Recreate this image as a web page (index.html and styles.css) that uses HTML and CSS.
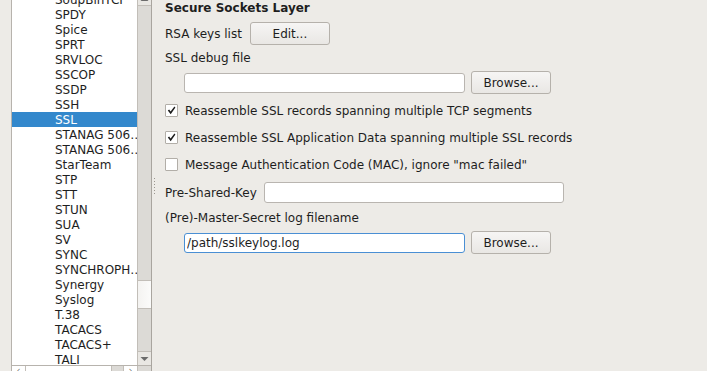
FILE: index.html
```html
<!DOCTYPE html>
<html lang="en">
<head>
  <meta charset="UTF-8" />
  <title>Preferences - Protocols - SSL</title>
  <link rel="stylesheet" href="styles.css">
</head>
<body>
  <div class="tree">
    <div class="tree-main">
      <ul class="proto-list">
        <li>SoupBinTCP</li>
        <li>SPDY</li>
        <li>Spice</li>
        <li>SPRT</li>
        <li>SRVLOC</li>
        <li>SSCOP</li>
        <li>SSDP</li>
        <li>SSH</li>
        <li class="selected">SSL</li>
        <li>STANAG 506…</li>
        <li>STANAG 506…</li>
        <li>StarTeam</li>
        <li>STP</li>
        <li>STT</li>
        <li>STUN</li>
        <li>SUA</li>
        <li>SV</li>
        <li>SYNC</li>
        <li>SYNCHROPH…</li>
        <li>Synergy</li>
        <li>Syslog</li>
        <li>T.38</li>
        <li>TACACS</li>
        <li>TACACS+</li>
        <li>TALI</li>
        <li>TAPA</li>
      </ul>
      <div class="vscroll">
        <div class="vs-btn vs-up">
          <svg width="9" height="6" viewBox="0 0 9 6"><path d="M0.5 5 L4.5 1 L8.5 5 Z" fill="#6b6b6b"/></svg>
        </div>
        <div class="vs-track">
          <div class="vs-thumb"></div>
        </div>
        <div class="vs-btn vs-down">
          <svg width="9" height="6" viewBox="0 0 9 6"><path d="M0.5 1 L4.5 5 L8.5 1 Z" fill="#6b6b6b"/></svg>
        </div>
      </div>
    </div>
    <div class="hscroll">
      <div class="hs-btn hs-left">&lsaquo;</div>
      <div class="hs-thumb"></div>
      <div class="hs-track"></div>
      <div class="hs-btn hs-right">&rsaquo;</div>
      <div class="hs-corner"></div>
    </div>
  </div>

  <div class="splitter"><div class="grip"></div></div>

  <div class="panel">
    <div class="title">Secure Sockets Layer</div>

    <div class="row rsa-row">
      <span>RSA keys list</span>
      <button class="btn">Edit...</button>
    </div>

    <div class="label debug-label">SSL debug file</div>
    <div class="row file-row">
      <input class="field file-field" type="text" value="">
      <button class="btn">Browse...</button>
    </div>

    <label class="check-row">
      <span class="box checked">
        <svg width="9" height="9" viewBox="0 0 9 9"><path d="M0.8 4.6 L2.2 3.6 L3.6 5.6 L7.4 0.6 L8.4 1.6 L3.7 8.2 Z" fill="#1c1c1c"/></svg>
      </span>
      Reassemble SSL records spanning multiple TCP segments
    </label>
    <label class="check-row">
      <span class="box checked">
        <svg width="9" height="9" viewBox="0 0 9 9"><path d="M0.8 4.6 L2.2 3.6 L3.6 5.6 L7.4 0.6 L8.4 1.6 L3.7 8.2 Z" fill="#1c1c1c"/></svg>
      </span>
      Reassemble SSL Application Data spanning multiple SSL records
    </label>
    <label class="check-row">
      <span class="box"></span>
      Message Authentication Code (MAC), ignore "mac failed"
    </label>

    <div class="row psk-row">
      <span class="psk-label">Pre-Shared-Key</span>
      <input class="field psk-field" type="text" value="">
    </div>

    <div class="label keylog-label">(Pre)-Master-Secret log filename</div>
    <div class="row file-row keylog-row">
      <input class="field file-field focused" type="text" value="/path/sslkeylog.log">
      <button class="btn">Browse...</button>
    </div>
  </div>
</body>
</html>
```

FILE: styles.css
```css
html, body {
  margin: 0;
  padding: 0;
  height: 100%;
  overflow: hidden;
}

body {
  display: flex;
  align-items: flex-start;
  background: #edebe7;
  color: #1e1e1e;
  font-family: 'DejaVu Sans', 'Liberation Sans', sans-serif;
  font-size: 12px;
}

/* protocol tree */

.tree {
  flex: none;
  margin-left: 11px;
  margin-top: -8px;
  width: 139px;
  border-left: 1px solid #b7b3ad;
  border-right: 1px solid #a9a59f;
  display: flex;
  flex-direction: column;
}

.tree-main {
  display: flex;
  height: 373px;
}

.proto-list {
  list-style: none;
  margin: 0;
  padding: 0;
  width: 125px;
  background: #fff;
  overflow: hidden;
}

.proto-list li {
  height: 15px;
  line-height: 16px;
  padding-left: 43px;
  white-space: nowrap;
  overflow: hidden;
}

.proto-list li.selected {
  background: #3388cc;
  color: #fff;
}

.vscroll {
  width: 13px;
  border-left: 1px solid #c2beb8;
  background: #dcdad6;
  display: flex;
  flex-direction: column;
}

.vs-btn {
  height: 13px;
  display: flex;
  align-items: center;
  justify-content: center;
  background: #e9e7e3;
}

.vs-up {
  border-bottom: 1px solid #c2beb8;
}

.vs-down {
  border-top: 1px solid #c2beb8;
}

.vs-track {
  flex: 1;
}

.vs-thumb {
  margin-top: 274px;
  height: 27px;
  border-top: 1px solid #c2beb8;
  border-bottom: 1px solid #c2beb8;
  background: linear-gradient(to right, #f4f3f1, #fbfbfa);
}

.hscroll {
  display: flex;
  height: 15px;
  border-top: 1px solid #b7b3ad;
  background: #fff;
  color: #6b6b6b;
  font-size: 10px;
  line-height: 10px;
}

.hs-btn {
  width: 13px;
  text-align: center;
}

.hs-thumb {
  width: 85px;
  border-left: 1px solid #c2beb8;
  border-right: 1px solid #c2beb8;
}

.hs-track {
  width: 11px;
  background: #dcdad6;
}

.hs-right {
  border-left: 1px solid #c2beb8;
}

.hs-corner {
  flex: 1;
  border-left: 1px solid #c2beb8;
  background: #dcdad6;
}

/* splitter */

.splitter {
  flex: none;
  width: 5px;
  height: 100%;
  display: flex;
  align-items: center;
  padding-left: 2px;
}

.grip {
  width: 1px;
  height: 16px;
  background: repeating-linear-gradient(to bottom, #9a968f 0, #9a968f 1px, transparent 1px, transparent 3px);
}

/* settings panel */

.panel {
  flex: 1;
  padding-left: 6px;
  display: flex;
  flex-direction: column;
}

.title {
  font-weight: bold;
  line-height: 16px;
  height: 14px;
}

.row {
  display: flex;
  align-items: center;
}

.rsa-row {
  margin-top: 8px;
  height: 23px;
  gap: 8px;
}

.label {
  line-height: 16px;
  height: 14px;
}

.debug-label {
  margin-top: 5px;
}

.file-row {
  margin-top: 7px;
  height: 23px;
  padding-left: 19px;
  gap: 6px;
}

.btn {
  width: 80px;
  height: 23px;
  padding: 0;
  border: 1px solid #b5b1ab;
  border-radius: 3px;
  background: linear-gradient(to bottom, #f6f5f4, #e9e7e4);
  color: #1e1e1e;
  font-family: inherit;
  font-size: 12px;
}

.field {
  box-sizing: border-box;
  height: 20px;
  padding: 0 2px;
  border: 1px solid #b9b5b0;
  border-radius: 3px;
  background: #fff;
  color: #1e1e1e;
  font-family: inherit;
  font-size: 12px;
  outline: none;
}

.file-field {
  width: 281px;
}

.field.focused {
  border-color: #4a8fd4;
}

.check-row {
  display: flex;
  align-items: center;
  height: 27px;
  gap: 7px;
}

.check-row:first-of-type {
  margin-top: 3px;
}

.box {
  box-sizing: border-box;
  width: 13px;
  height: 13px;
  border: 1px solid #b2aea8;
  border-radius: 1px;
  background: #fff;
  display: flex;
  align-items: center;
  justify-content: center;
}

.psk-row {
  margin-top: 4px;
  height: 21px;
  gap: 0;
}

.psk-label {
  width: 99px;
}

.psk-field {
  width: 300px;
  height: 21px;
}

.keylog-label {
  margin-top: 7px;
}

.keylog-row {
  margin-top: 7px;
}
```
